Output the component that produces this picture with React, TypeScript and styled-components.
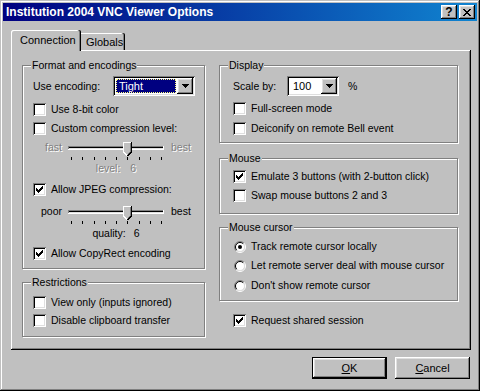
import React from "react";
import styled, { createGlobalStyle } from "styled-components";

const GlobalStyle = createGlobalStyle`
  html, body {
    margin: 0;
    padding: 0;
    background: #c0c0c0;
  }
  body {
    font-family: "Liberation Sans", Arial, sans-serif;
    font-size: 10.5px;
    line-height: 13px;
    color: #000;
  }
  * {
    box-sizing: border-box;
  }
`;

const raised =
    "inset -1px -1px 0 #000, inset 1px 1px 0 #fff, inset -2px -2px 0 #808080, inset 2px 2px 0 #dfdfdf";
const sunken =
    "inset 1px 1px 0 #808080, inset -1px -1px 0 #fff, inset 2px 2px 0 #000, inset -2px -2px 0 #dfdfdf";

const Window = styled.div`
    width: 480px;
    height: 391px;
    padding: 3px;
    background: #c0c0c0;
    display: flex;
    flex-direction: column;
    box-shadow: inset -1px -1px 0 #000, inset 1px 1px 0 #c0c0c0,
        inset -2px -2px 0 #808080, inset 2px 2px 0 #fff;
`;

const TitleBar = styled.div`
    height: 18px;
    display: flex;
    align-items: center;
    padding: 0 2px 0 3px;
    background: linear-gradient(to right, #000080, #1084d0);
`;

const Title = styled.span`
    flex: 1;
    color: #fff;
    font-weight: bold;
    font-size: 12px;
    white-space: nowrap;
`;

const CaptionButtons = styled.div`
    display: flex;
    gap: 2px;
`;

const CaptionButton = styled.span`
    width: 16px;
    height: 14px;
    display: flex;
    align-items: center;
    justify-content: center;
    background: #c0c0c0;
    box-shadow: ${raised};
    font-weight: bold;
    font-size: 12px;
`;

const Body = styled.div`
    flex: 1;
    display: flex;
    flex-direction: column;
    padding: 9px 6px 0 8px;
`;

const TabStrip = styled.div`
    height: 20px;
    display: flex;
    align-items: flex-end;
`;

const Tab = styled.div<{ $active?: boolean }>`
    position: relative;
    z-index: ${(p) => (p.$active ? 1 : 0)};
    height: ${(p) => (p.$active ? 21 : 17)}px;
    width: ${(p) => (p.$active ? 70 : 44)}px;
    margin-bottom: ${(p) => (p.$active ? -1 : 0)}px;
    padding: ${(p) => (p.$active ? "4px 0 0 9px" : "3px 0 0 5px")};
    background: #c0c0c0;
    border-top-left-radius: ${(p) => (p.$active ? 2 : 0)}px;
    border-top-right-radius: 2px;
    box-shadow: ${(p) =>
        p.$active
            ? "inset -1px 0 0 #000, inset -2px 0 0 #808080, inset 1px 1px 0 #fff"
            : "inset -1px 0 0 #000, inset -2px 0 0 #808080, inset 0 1px 0 #fff"};
    font-size: 11px;
    white-space: nowrap;
`;

const Panel = styled.div`
    height: 300px;
    display: grid;
    grid-template-columns: 183px 239px;
    column-gap: 14px;
    align-items: start;
    padding: 15px 0 0 11px;
    box-shadow: inset -1px -1px 0 #000, inset 1px 1px 0 #fff,
        inset -2px -2px 0 #808080;
`;

const Column = styled.div`
    display: flex;
    flex-direction: column;
`;

const Group = styled.div<{ $mt?: number; $pb: number; $pl: number }>`
    margin-top: ${(p) => p.$mt ?? 0}px;
    padding: 0 0 ${(p) => p.$pb}px ${(p) => p.$pl}px;
    border: 1px solid #808080;
    box-shadow: 1px 1px 0 #fff, inset 1px 1px 0 #fff;
`;

const GroupCaption = styled.div<{ $pl: number }>`
    width: fit-content;
    margin: -7px 0 0 ${(p) => 8 - p.$pl}px;
    padding: 0 1px;
    background: #c0c0c0;
    white-space: nowrap;
`;

const Row = styled.div<{ $h?: number; $mt?: number; $pl?: number }>`
    display: flex;
    align-items: center;
    height: ${(p) => p.$h ?? 19}px;
    margin-top: ${(p) => p.$mt ?? 0}px;
    padding-left: ${(p) => p.$pl ?? 0}px;
    white-space: nowrap;
`;

const Text = styled.span<{ $disabled?: boolean; $w?: number; $ml?: number }>`
    color: ${(p) => (p.$disabled ? "#808080" : "#000")};
    text-shadow: ${(p) => (p.$disabled ? "1px 1px 0 #fff" : "none")};
    width: ${(p) => (p.$w ? `${p.$w}px` : "auto")};
    margin-left: ${(p) => p.$ml ?? 0}px;
    flex-shrink: 0;
`;

const CheckBox = styled.span`
    width: 13px;
    height: 13px;
    flex-shrink: 0;
    margin-right: 5px;
    display: flex;
    align-items: center;
    justify-content: center;
    background: #fff;
    box-shadow: ${sunken};
`;

const RadioMark = styled.svg`
    flex-shrink: 0;
    margin: 0 5px 0 1px;
`;

const ComboBox = styled.div<{ $w: number }>`
    width: ${(p) => p.$w}px;
    height: 20px;
    padding: 2px;
    display: flex;
    background: #fff;
    box-shadow: ${sunken};
`;

const ComboValue = styled.div<{ $selected?: boolean }>`
    flex: 1;
    margin: 1px;
    padding-left: 2px;
    font-size: 11px;
    line-height: 12px;
    color: ${(p) => (p.$selected ? "#fff" : "#000")};
    background: ${(p) => (p.$selected ? "#000080" : "transparent")};
    border: 1px ${(p) => (p.$selected ? "dotted #ffff80" : "solid transparent")};
`;

const ComboButton = styled.span`
    width: 16px;
    height: 16px;
    display: flex;
    align-items: center;
    justify-content: center;
    background: #c0c0c0;
    box-shadow: ${raised};
`;

const SliderRow = styled.div<{ $mt: number }>`
    display: flex;
    align-items: flex-start;
    height: 20px;
    margin-top: ${(p) => p.$mt}px;
`;

const EndLabel = styled(Text)<{ $side: "left" | "right" }>`
    width: 29px;
    text-align: ${(p) => p.$side};
`;

const SliderTrack = styled.svg`
    flex-shrink: 0;
    margin: 0 5px 0 4px;
`;

const SliderCaption = styled.div<{ $mt: number; $gap: number }>`
    display: flex;
    justify-content: center;
    gap: ${(p) => p.$gap}px;
    width: 100px;
    height: 13px;
    margin: ${(p) => p.$mt}px 0 0 33px;
`;

const Footer = styled.div`
    display: flex;
    justify-content: flex-end;
    gap: 8px;
    margin-top: 7px;
    padding-right: 1px;
`;

const Button = styled.div<{ $default?: boolean }>`
    width: 75px;
    height: 22px;
    display: flex;
    align-items: center;
    justify-content: center;
    background: #c0c0c0;
    border: ${(p) => (p.$default ? "1px solid #000" : "none")};
    box-shadow: ${raised};
    font-size: 11px;
`;

const DownArrow = () => (
    <svg width="7" height="4" viewBox="0 0 7 4">
        <path d="M0 0h7v1H0zM1 1h5v1H1zM2 2h3v1H2zM3 3h1v1H3z" fill="#000" />
    </svg>
);

const Check = ({ checked }: { checked?: boolean }) => (
    <CheckBox>
        {checked && (
            <svg width="7" height="7" viewBox="0 0 7 7">
                <path
                    d="M0 2h1v3H0zM1 3h1v3H1zM2 4h1v3H2zM3 3h1v3H3zM4 2h1v3H4zM5 1h1v3H5zM6 0h1v3H6z"
                    fill="#000"
                />
            </svg>
        )}
    </CheckBox>
);

const Radio = ({ checked }: { checked?: boolean }) => (
    <RadioMark width="12" height="12" viewBox="0 0 12 12">
        <circle cx="6" cy="6" r="4.5" fill="#fff" />
        <path d="M2.1 9.9A5.5 5.5 0 0 1 9.9 2.1" stroke="#808080" fill="none" />
        <path d="M9.9 2.1A5.5 5.5 0 0 1 2.1 9.9" stroke="#fff" fill="none" />
        <path d="M2.8 9.2A4.5 4.5 0 0 1 9.2 2.8" stroke="#000" fill="none" />
        <path d="M9.2 2.8A4.5 4.5 0 0 1 2.8 9.2" stroke="#dfdfdf" fill="none" />
        {checked && <circle cx="6" cy="6" r="2" fill="#000" />}
    </RadioMark>
);

const ticks = Array.from({ length: 9 }, (_, i) => Math.round(5 + i * 11.25));

const Slider = ({ value }: { value: number }) => {
    const cx = ticks[value - 1];
    const tx = cx - 4;
    return (
        <SliderTrack width="100" height="20" viewBox="0 0 100 20" shapeRendering="crispEdges">
            <rect x="2" y="5" width="96" height="1" fill="#808080" />
            <rect x="3" y="6" width="94" height="1" fill="#000" />
            <rect x="3" y="7" width="94" height="1" fill="#dfdfdf" />
            <rect x="2" y="8" width="96" height="1" fill="#fff" />
            <rect x="2" y="5" width="1" height="3" fill="#808080" />
            <rect x="97" y="5" width="1" height="4" fill="#fff" />
            {ticks.map((t) => (
                <rect key={t} x={t} y="16" width="1" height="3" fill="#000" />
            ))}
            <polygon
                points={`${tx},1 ${tx + 9},1 ${tx + 9},11 ${tx + 4.5},15.5 ${tx},11`}
                fill="#c0c0c0"
            />
            <path d={`M${tx + 0.5} 11V1.5H${tx + 8}`} stroke="#fff" fill="none" />
            <path d={`M${tx + 8.5} 1V11L${tx + 4.5} 15`} stroke="#000" fill="none" />
            <path d={`M${tx + 7.5} 2V10.5L${tx + 4.5} 13.5`} stroke="#808080" fill="none" />
            <path d={`M${tx + 0.5} 11L${tx + 4} 14.5`} stroke="#fff" fill="none" />
        </SliderTrack>
    );
};

const CheckRow = ({
    label,
    checked,
    h,
    mt,
    pl
}: {
    label: string;
    checked?: boolean;
    h?: number;
    mt?: number;
    pl?: number;
}) => (
    <Row $h={h} $mt={mt} $pl={pl}>
        <Check checked={checked} />
        <Text>{label}</Text>
    </Row>
);

const RadioRow = ({ label, checked, mt }: { label: string; checked?: boolean; mt?: number }) => (
    <Row $mt={mt}>
        <Radio checked={checked} />
        <Text>{label}</Text>
    </Row>
);

const App: React.FC = () => {
    return (
        <>
            <GlobalStyle />
            <Window>
                <TitleBar>
                    <Title>Institution 2004 VNC Viewer Options</Title>
                    <CaptionButtons>
                        <CaptionButton>?</CaptionButton>
                        <CaptionButton>
                            <svg width="8" height="7" viewBox="0 0 8 7">
                                <path
                                    d="M0 0h2v1H0zM6 0h2v1H6zM1 1h2v1H1zM5 1h2v1H5zM2 2h4v1H2zM3 3h2v1H3zM2 4h4v1H2zM1 5h2v1H1zM5 5h2v1H5zM0 6h2v1H0zM6 6h2v1H6z"
                                    fill="#000"
                                />
                            </svg>
                        </CaptionButton>
                    </CaptionButtons>
                </TitleBar>
                <Body>
                    <TabStrip>
                        <Tab $active>Connection</Tab>
                        <Tab>Globals</Tab>
                    </TabStrip>
                    <Panel>
                        <Column>
                            <Group $pb={5} $pl={10}>
                                <GroupCaption $pl={10}>Format and encodings</GroupCaption>
                                <Row $h={20} $mt={4}>
                                    <Text $w={80}>Use encoding:</Text>
                                    <ComboBox $w={82}>
                                        <ComboValue $selected>Tight</ComboValue>
                                        <ComboButton>
                                            <DownArrow />
                                        </ComboButton>
                                    </ComboBox>
                                </Row>
                                <CheckRow label="Use 8-bit color" mt={4} />
                                <CheckRow label="Custom compression level:" />
                                <SliderRow $mt={3}>
                                    <EndLabel $side="right" $disabled>
                                        fast
                                    </EndLabel>
                                    <Slider value={6} />
                                    <Text $disabled>best</Text>
                                </SliderRow>
                                <SliderCaption $mt={1} $gap={10}>
                                    <Text $disabled>level:</Text>
                                    <Text $disabled>6</Text>
                                </SliderCaption>
                                <CheckRow label="Allow JPEG compression:" checked mt={5} />
                                <SliderRow $mt={6}>
                                    <EndLabel $side="right">poor</EndLabel>
                                    <Slider value={6} />
                                    <Text>best</Text>
                                </SliderRow>
                                <SliderCaption $mt={2} $gap={8}>
                                    <Text>quality:</Text>
                                    <Text>6</Text>
                                </SliderCaption>
                                <CheckRow label="Allow CopyRect encoding" checked mt={4} />
                            </Group>
                            <Group $mt={13} $pb={7} $pl={10}>
                                <GroupCaption $pl={10}>Restrictions</GroupCaption>
                                <CheckRow label="View only (inputs ignored)" h={18} mt={4} />
                                <CheckRow label="Disable clipboard transfer" h={18} />
                            </Group>
                        </Column>
                        <Column>
                            <Group $pb={4} $pl={13}>
                                <GroupCaption $pl={13}>Display</GroupCaption>
                                <Row $h={20} $mt={4}>
                                    <Text $w={54}>Scale by:</Text>
                                    <ComboBox $w={52}>
                                        <ComboValue>100</ComboValue>
                                        <ComboButton>
                                            <DownArrow />
                                        </ComboButton>
                                    </ComboBox>
                                    <Text $ml={9}>%</Text>
                                </Row>
                                <CheckRow label="Full-screen mode" mt={3} />
                                <CheckRow label="Deiconify on remote Bell event" mt={1} />
                            </Group>
                            <Group $mt={15} $pb={8} $pl={13}>
                                <GroupCaption $pl={13}>Mouse</GroupCaption>
                                <CheckRow label="Emulate 3 buttons (with 2-button click)" checked mt={2} />
                                <CheckRow label="Swap mouse buttons 2 and 3" />
                            </Group>
                            <Group $mt={13} $pb={5} $pl={13}>
                                <GroupCaption $pl={13}>Mouse cursor</GroupCaption>
                                <RadioRow label="Track remote cursor locally" checked mt={3} />
                                <RadioRow label="Let remote server deal with mouse cursor" />
                                <RadioRow label="Don't show remote cursor" mt={1} />
                            </Group>
                            <CheckRow label="Request shared session" checked mt={10} pl={14} />
                        </Column>
                    </Panel>
                    <Footer>
                        <Button $default>
                            <span>
                                <u>O</u>K
                            </span>
                        </Button>
                        <Button>
                            <span>
                                <u>C</u>ancel
                            </span>
                        </Button>
                    </Footer>
                </Body>
            </Window>
        </>
    );
};

export default App;
